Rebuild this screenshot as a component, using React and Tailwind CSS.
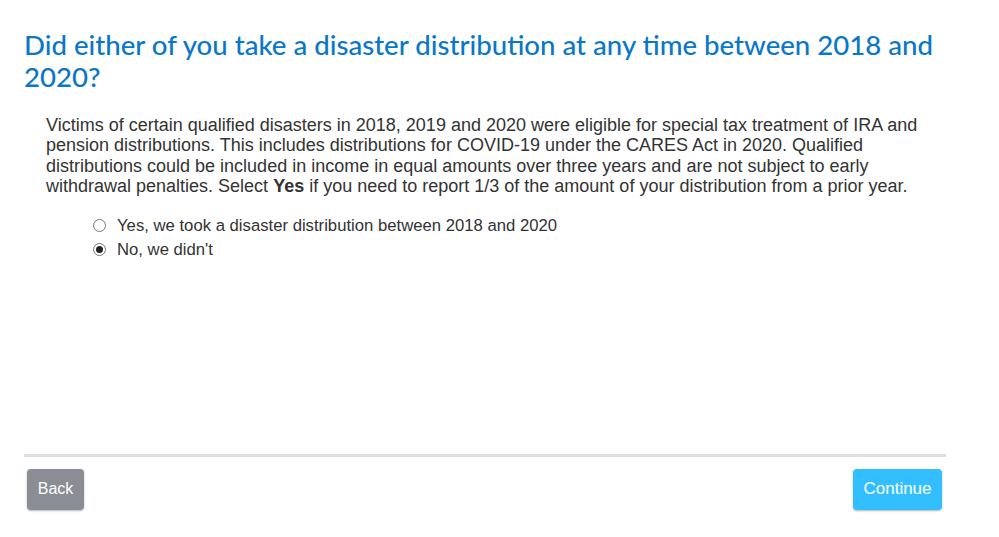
import React, { useState } from 'react';

const RadioOption = ({ label, checked, onSelect }) => (
  <label className="flex items-center h-[24px] cursor-pointer" onClick={onSelect}>
    <span className="w-[13px] h-[13px] rounded-full border border-[#767676] bg-white flex items-center justify-center">
      {checked && <span className="w-[7px] h-[7px] rounded-full bg-[#222]" />}
    </span>
    <span className="ml-[11px]">{label}</span>
  </label>
);

export default function App() {
  const [choice, setChoice] = useState('no');

  return (
    <div className="w-[999px] h-[537px] bg-white pt-[29px] pl-[24px]">
      <div className="w-[922px]">
        <h1 className="text-[27.6px] leading-[32px] text-[#0a77c8] font-medium" style={{ fontFamily: 'Lato, "Open Sans", sans-serif' }}>
          Did either of you take a disaster distribution at any time between 2018 and 2020?
        </h1>

        <div className="ml-[22px] mt-[22px] text-[#333]" style={{ fontFamily: '"Liberation Sans", Arial, sans-serif' }}>
          <p className="w-[890px] text-[18px] leading-[20.4px]">
            Victims of certain qualified disasters in 2018, 2019 and 2020 were eligible for special tax treatment of IRA and pension distributions. This includes distributions for COVID-19 under the CARES Act in 2020. Qualified distributions could be included in income in equal amounts over three years and are not subject to early withdrawal penalties. Select <b>Yes</b> if you need to report 1/3 of the amount of your distribution from a prior year.
          </p>

          <div className="mt-[17px] ml-[47px] text-[16.7px]">
            <RadioOption
              label="Yes, we took a disaster distribution between 2018 and 2020"
              checked={choice === 'yes'}
              onSelect={() => setChoice('yes')}
            />
            <RadioOption
              label="No, we didn't"
              checked={choice === 'no'}
              onSelect={() => setChoice('no')}
            />
          </div>
        </div>

        <div className="mt-[192px] h-[3px] bg-[#dedede]" />

        <div className="flex justify-between mt-[12px]" style={{ fontFamily: '"Liberation Sans", Arial, sans-serif' }}>
          <button type="button" className="ml-[3px] w-[57px] h-[41px] rounded-[4px] bg-[#8a8d93] text-white text-[16px] shadow-[0_1px_2px_rgba(0,0,0,0.3)]">
            Back
          </button>
          <button type="button" className="mr-[4px] w-[89px] h-[41px] rounded-[4px] bg-[#33bfff] text-white text-[17px] shadow-[0_1px_2px_rgba(0,0,0,0.3)]">
            Continue
          </button>
        </div>
      </div>
    </div>
  );
}
